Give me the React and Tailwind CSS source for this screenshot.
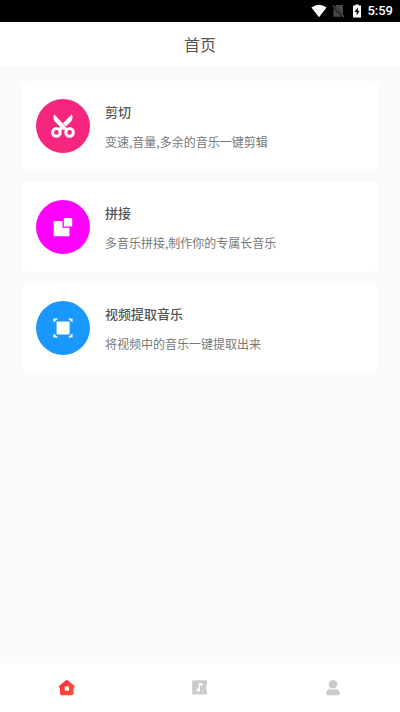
import React from "react";

function ScissorsIcon() {
  return (
    <svg viewBox="0 0 24 24" className="h-6 w-6" aria-hidden="true">
      <g fill="#fff">
        <path d="M3.2 0.2C1.8 3.4 2.4 6.4 4.8 8.4L13 16.4L16 14.6L11.6 9.2Z" />
        <path d="M20.8 0.2C22.2 3.4 21.6 6.4 19.2 8.4L14.8 12.4L12 9.2Z" />
        <path d="M10.4 11.4L13.2 13.6L9.8 17L7.2 14.6Z" />
      </g>
      <g fill="none" stroke="#fff" strokeWidth="3">
        <circle cx="5.4" cy="18.4" r="3.8" />
        <circle cx="18.6" cy="18.4" r="3.8" />
      </g>
    </svg>
  );
}

function JoinIcon() {
  return (
    <svg viewBox="0 0 20 20" className="h-5 w-5" fill="#fff" aria-hidden="true">
      <path d="M1.4 4H9.5V10.7H16.4V19.2H1.4Q0.6 19.2 0.6 18.4V4.8Q0.6 4 1.4 4Z" />
      <rect x="10.8" y="1" width="8.4" height="8.4" rx="0.5" />
    </svg>
  );
}

function ExtractIcon() {
  return (
    <svg viewBox="0 0 20 20" className="h-5 w-5" fill="#fff" aria-hidden="true">
      <rect x="3.6" y="3.4" width="13" height="13" rx="0.8" />
      <path d="M0.5 0.6H5L0.5 4.8ZM19.5 0.6H15L19.5 4.8ZM0.5 19.4H5L0.5 15.2ZM19.5 19.4H15L19.5 15.2Z" />
    </svg>
  );
}

function HomeIcon() {
  return (
    <svg viewBox="0 0 18 18" className="h-[18px] w-[18px]" aria-hidden="true">
      <defs>
        <linearGradient id="home" x1="0" y1="0" x2="1" y2="1">
          <stop offset="0" stopColor="#fb2c2c" />
          <stop offset="1" stopColor="#ff5540" />
        </linearGradient>
      </defs>
      <path
        fill="url(#home)"
        fillRule="evenodd"
        d="M8 1.3Q8.8 0.7 9.6 1.3L16.8 7.2Q17.2 8.4 16 8.4H15.6V14.6Q15.6 16.2 14 16.2H3.6Q2 16.2 2 14.6V8.4H1.4Q0.4 8.4 0.8 7.2ZM8 7.2Q6.6 7.2 6.6 8.6V10.4Q6.6 11.8 8 11.8H9.6Q11 11.8 11 10.4V8.6Q11 7.2 9.6 7.2Z"
      />
    </svg>
  );
}

function MusicIcon() {
  return (
    <svg viewBox="0 0 18 18" className="h-[18px] w-[18px]" aria-hidden="true">
      <path
        fill="#cbcbcb"
        d="M2 1.2H15.4Q16 1.2 16 1.8V6Q15 6.4 15 8.4Q15 10.4 16 10.8V15Q16 15.6 15.4 15.6H2Q1.2 15.6 1.2 14.8V2Q1.2 1.2 2 1.2Z"
      />
      <path fill="#fff" d="M7.8 4L11.4 4.4V6.4L9 6.2V11H7.8Z" />
      <circle cx="7.4" cy="11" r="1.8" fill="#fff" />
    </svg>
  );
}

function UserIcon() {
  return (
    <svg viewBox="0 0 18 18" className="h-[18px] w-[18px]" fill="#cbcbcb" aria-hidden="true">
      <circle cx="9" cy="5.2" r="4.3" />
      <path d="M5.4 10Q9 11.2 12.6 10Q15.8 11 15.8 15Q15.8 16.2 14.6 16.2H3.4Q2.2 16.2 2.2 15Q2.2 11 5.4 10Z" />
    </svg>
  );
}

const tools = [
  {
    title: "剪切",
    text: "变速,音量,多余的音乐一键剪辑",
    color: "bg-[#f6267f]",
    Icon: ScissorsIcon,
  },
  {
    title: "拼接",
    text: "多音乐拼接,制作你的专属长音乐",
    color: "bg-[#ff00ff]",
    Icon: JoinIcon,
  },
  {
    title: "视频提取音乐",
    text: "将视频中的音乐一键提取出来",
    color: "bg-[#1a98ff]",
    Icon: ExtractIcon,
  },
];

const tabs = [
  { label: "首页", Icon: HomeIcon },
  { label: "音乐", Icon: MusicIcon },
  { label: "我的", Icon: UserIcon },
];

function StatusBar() {
  return (
    <div className="flex h-[22px] items-center justify-end bg-black pr-[7px] text-white">
      <svg viewBox="0 0 16 14" className="mr-1 h-[14px] w-4" fill="#fff" aria-hidden="true">
        <path d="M0.4 3.6Q8 -2 15.6 3.6L8 13.2Z" />
      </svg>
      <svg viewBox="0 0 14 14" className="mr-2 h-[14px] w-[14px]" aria-hidden="true">
        <path fill="#484848" d="M5.4 1H12V10.6L4 2.4ZM2.4 4.2L10.8 12.8H2.4Z" />
        <path stroke="#555" strokeWidth="1.2" d="M1.6 1.4L13 13" />
      </svg>
      <svg viewBox="0 0 8 14" className="mr-[6px] h-[14px] w-2" aria-hidden="true">
        <path fill="#fff" d="M2.4 0.4H5.6V1.6H8V13.4H0V1.6H2.4Z" />
        <path fill="#000" d="M4.8 3.2L1.6 8H3.6V11.6L6.6 6.8H4.8Z" />
      </svg>
      <span className="font-[Roboto,sans-serif] text-[13px] leading-4 font-medium">5:59</span>
    </div>
  );
}

function ToolCard({ title, text, color, Icon }) {
  return (
    <button
      type="button"
      className="flex w-full items-center gap-[15px] rounded-md bg-white px-[14px] py-[18px] text-left"
    >
      <span className={`flex h-[54px] w-[54px] shrink-0 items-center justify-center rounded-full ${color}`}>
        <Icon />
      </span>
      <span className="flex min-w-0 flex-col gap-[10px] pt-px">
        <span className="text-[13px] leading-5 font-medium text-[#555]">{title}</span>
        <span className="text-[12px] leading-5 text-[#777]">{text}</span>
      </span>
    </button>
  );
}

export default function App() {
  return (
    <div className="flex min-h-screen flex-col bg-[#fafafa] font-['Noto_Sans_CJK_SC',sans-serif]">
      <StatusBar />
      <header className="flex h-11 items-center justify-center bg-white">
        <h1 className="text-[16px] leading-6 text-[#555]">首页</h1>
      </header>

      <main className="flex flex-1 flex-col gap-[11px] px-[22px] pt-[15px]">
        {tools.map((tool) => (
          <ToolCard key={tool.title} {...tool} />
        ))}
      </main>

      <nav className="flex h-[49px] bg-white">
        {tabs.map(({ label, Icon }) => (
          <button
            key={label}
            type="button"
            aria-label={label}
            className="flex flex-1 items-center justify-center"
          >
            <Icon />
          </button>
        ))}
      </nav>
    </div>
  );
}
